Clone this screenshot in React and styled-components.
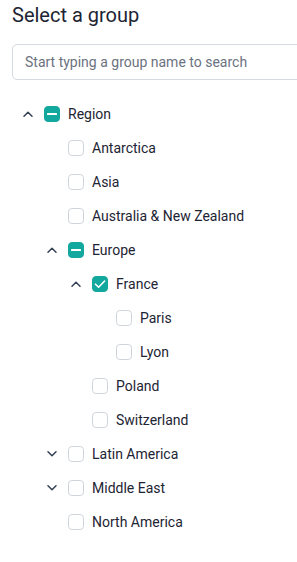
import React from "react";
import styled, { createGlobalStyle } from "styled-components";

const Global = createGlobalStyle`
  html, body { margin: 0; padding: 0; background: #fff; overflow: hidden; }
  body { font-family: Roboto, "Liberation Sans", sans-serif; }
  * { box-sizing: border-box; }
`;

const Page = styled.div`
  width: 297px;
  height: 562px;
  overflow: hidden;
  padding: 0 0 0 12px;
`;

const Title = styled.h1`
  margin: 0;
  font-size: 20px;
  line-height: 30px;
  font-weight: 400;
  color: #1d2433;
`;

const Search = styled.input`
  display: block;
  margin-top: 14px;
  width: 320px;
  height: 36px;
  border: 1px solid #d5d9e0;
  border-radius: 5px;
  padding: 0 12px;
  font-family: Roboto, "Liberation Sans", sans-serif;
  font-size: 14px;
  color: #1d2433;
  outline: none;
  &::placeholder { color: #6b7280; }
`;

const Tree = styled.ul`
  list-style: none;
  margin: 17px 0 0 -12px;
  padding: 0;
`;

const Row = styled.li`
  display: flex;
  align-items: center;
  height: 34px;
  padding-left: ${(p) => 20 + p.$level * 24}px;
  font-size: 14px;
  color: #1d2433;
`;

const Toggle = styled.span`
  width: 16px;
  height: 16px;
  margin-right: 8px;
  display: flex;
  align-items: center;
  justify-content: center;
  color: #344054;
`;

const Box = styled.span`
  width: 16px;
  height: 16px;
  border-radius: 4px;
  margin-right: 8px;
  display: flex;
  align-items: center;
  justify-content: center;
  background: ${(p) => (p.$state === "none" ? "#fff" : "#12a89e")};
  border: 1px solid ${(p) => (p.$state === "none" ? "#d0d5dd" : "#12a89e")};
`;

const Label = styled.span`
  line-height: 16px;
`;

const Chevron = ({ up }) => (
  <svg width="10" height="6" viewBox="0 0 10 6" fill="none">
    <path
      d={up ? "M1 5.2 L5 1.2 L9 5.2" : "M1 0.8 L5 4.8 L9 0.8"}
      stroke="currentColor"
      strokeWidth="1.5"
      strokeLinecap="round"
      strokeLinejoin="round"
    />
  </svg>
);

const Mark = ({ state }) => {
  if (state === "partial")
    return (
      <svg width="12" height="12" viewBox="0 0 12 12">
        <rect x="1" y="5" width="10" height="2" rx="0.6" fill="#fff" />
      </svg>
    );
  if (state === "checked")
    return (
      <svg width="12" height="12" viewBox="0 0 12 12" fill="none">
        <path d="M1.5 6.2 L4.6 9.2 L10.6 3" stroke="#fff" strokeWidth="1.6" strokeLinecap="round" strokeLinejoin="round" />
      </svg>
    );
  return null;
};

const items = [
  { label: "Region", level: 0, toggle: "up", state: "partial" },
  { label: "Antarctica", level: 1, state: "none" },
  { label: "Asia", level: 1, state: "none" },
  { label: "Australia & New Zealand", level: 1, state: "none" },
  { label: "Europe", level: 1, toggle: "up", state: "partial" },
  { label: "France", level: 2, toggle: "up", state: "checked" },
  { label: "Paris", level: 3, state: "none" },
  { label: "Lyon", level: 3, state: "none" },
  { label: "Poland", level: 2, state: "none" },
  { label: "Switzerland", level: 2, state: "none" },
  { label: "Latin America", level: 1, toggle: "down", state: "none" },
  { label: "Middle East", level: 1, toggle: "down", state: "none" },
  { label: "North America", level: 1, state: "none" },
];

export default function App() {
  return (
    <>
      <Global />
      <Page>
        <Title>Select a group</Title>
        <Search placeholder="Start typing a group name to search" />
        <Tree>
          {items.map((it) => (
            <Row key={it.label} $level={it.level}>
              <Toggle>{it.toggle && <Chevron up={it.toggle === "up"} />}</Toggle>
              <Box $state={it.state}>
                <Mark state={it.state} />
              </Box>
              <Label>{it.label}</Label>
            </Row>
          ))}
        </Tree>
      </Page>
    </>
  );
}
